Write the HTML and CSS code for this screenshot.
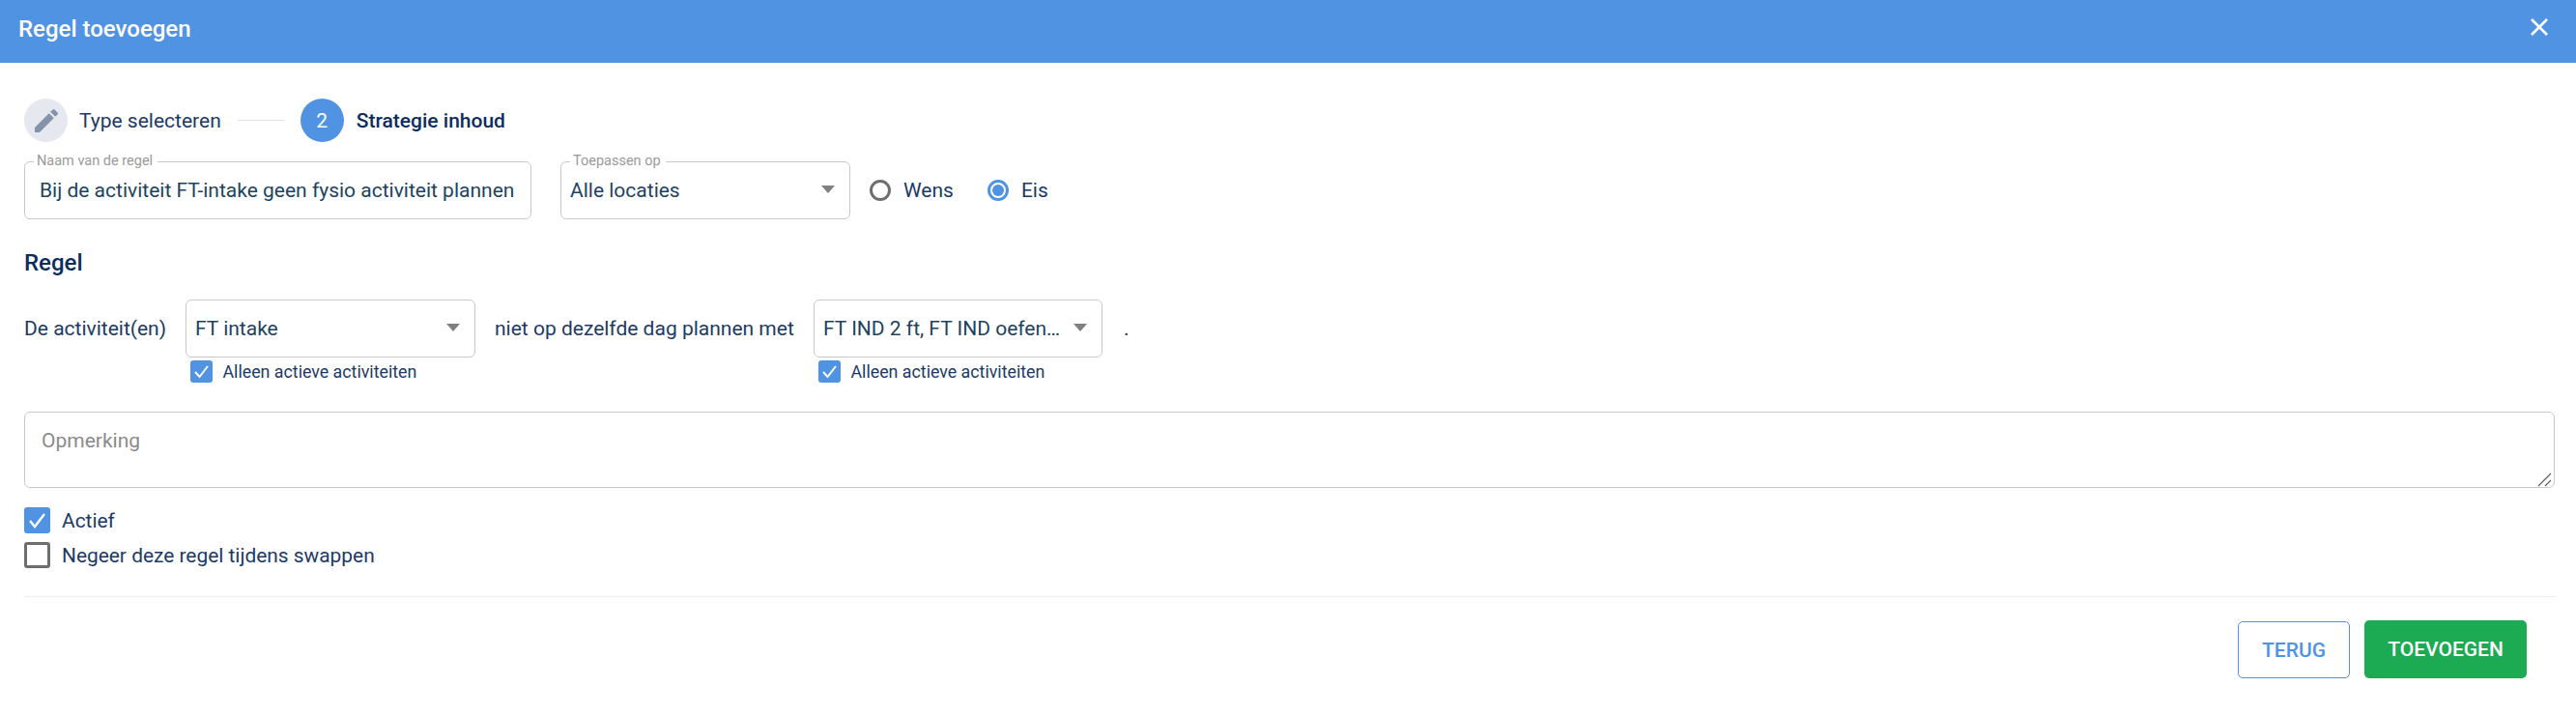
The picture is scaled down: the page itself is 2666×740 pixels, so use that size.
FILE: index.html
```html
<!DOCTYPE html>
<html lang="nl">
<head>
<meta charset="utf-8">
<title>Regel toevoegen</title>
<link rel="stylesheet" href="styles.css">
</head>
<body>
<header class="topbar">
  <h1 class="title">Regel toevoegen</h1>
  <svg class="close" viewBox="0 0 18 18" width="18" height="18"><path d="M1 1L17 17M17 1L1 17" fill="none" stroke="#fff" stroke-width="2.6"/></svg>
</header>
<main class="content">
  <div class="stepper">
    <span class="step-icon done">
      <svg viewBox="0 0 24 24" width="32" height="32"><path fill="#8593aa" d="M3 17.25V21h3.75L17.81 9.94l-3.75-3.75L3 17.25zM20.71 7.04a1 1 0 0 0 0-1.41l-2.34-2.34a1 1 0 0 0-1.41 0l-1.83 1.83 3.75 3.75 1.83-1.83z"/></svg>
    </span>
    <span class="step-label">Type selecteren</span>
    <span class="step-line"></span>
    <span class="step-icon active">2</span>
    <span class="step-label current">Strategie inhoud</span>
  </div>

  <div class="row-top">
    <div class="field name-field">
      <span class="legend">Naam van de regel</span>
      <span class="value">Bij de activiteit FT-intake geen fysio activiteit plannen</span>
    </div>
    <div class="field scope-field">
      <span class="legend">Toepassen op</span>
      <span class="value">Alle locaties</span>
      <span class="caret"></span>
    </div>
    <label class="radio"><span class="radio-dot"></span>Wens</label>
    <label class="radio"><span class="radio-dot on"></span>Eis</label>
  </div>

  <h2 class="section">Regel</h2>

  <div class="rule">
    <span class="rule-text first">De activiteit(en)</span>
    <div class="rule-col">
      <div class="field act-field">
        <span class="value">FT intake</span>
        <span class="caret"></span>
      </div>
      <label class="small-check">
        <span class="box small on"><svg viewBox="0 0 23 23" width="23" height="23"><path d="M5 12L9.5 17L18 6" fill="none" stroke="#fff" stroke-width="2"/></svg></span>
        Alleen actieve activiteiten
      </label>
    </div>
    <span class="rule-text mid">niet op dezelfde dag plannen met</span>
    <div class="rule-col narrow">
      <div class="field act-field">
        <span class="value">FT IND 2 ft, FT IND oefen…</span>
        <span class="caret"></span>
      </div>
      <label class="small-check">
        <span class="box small on"><svg viewBox="0 0 23 23" width="23" height="23"><path d="M5 12L9.5 17L18 6" fill="none" stroke="#fff" stroke-width="2"/></svg></span>
        Alleen actieve activiteiten
      </label>
    </div>
    <span class="rule-text dot">.</span>
  </div>

  <div class="remark">
    <span class="placeholder">Opmerking</span>
    <svg class="grip" viewBox="0 0 15 15" width="15" height="15"><path d="M1 14L14 1M8 14L14 8" stroke="#5f5f5f" stroke-width="1.2" fill="none"/></svg>
  </div>

  <label class="check">
    <span class="box on"><svg viewBox="0 0 27 27" width="27" height="27"><path d="M6 14L11 20L21 7" fill="none" stroke="#fff" stroke-width="2.4"/></svg></span>
    Actief
  </label>
  <label class="check second">
    <span class="box"></span>
    Negeer deze regel tijdens swappen
  </label>

  <hr class="divider">

  <div class="actions">
    <button class="btn ghost" type="button">TERUG</button>
    <button class="btn primary" type="button">TOEVOEGEN</button>
  </div>
</main>
</body>
</html>
```
FILE: styles.css
```css
* { box-sizing: border-box; }
html, body { margin: 0; padding: 0; background: #fff; }
body { font-family: Roboto, "Liberation Sans", sans-serif; color: #1c3a66; width: 2666px; height: 740px; overflow: hidden; }

.topbar { height: 65px; background: #5093e3; display: flex; align-items: center; justify-content: space-between; padding: 0 29px 6px 19px; }
.title { margin: 0; font-size: 24px; font-weight: 500; color: #fff; }
.close { display: block; margin-top: -3px; }

.content { padding: 37px 22px 0 25px; }

.stepper { display: flex; align-items: center; height: 45px; }
.step-icon { width: 45px; height: 45px; border-radius: 50%; display: flex; align-items: center; justify-content: center; flex: none; }
.step-icon.done { background: #e5e8ee; }
.step-icon.active { background: #5093e3; color: #fff; font-size: 21px; }
.step-label { font-size: 21px; margin-left: 12px; color: #1c3a66; }
.step-label.current { font-weight: 500; color: #0c2d5e; margin-left: 13px; }
.step-line { width: 48px; height: 1px; background: #dcdfe3; margin: 0 17px; }

.row-top { display: flex; align-items: center; margin-top: 20px; }
.field { position: relative; height: 60px; border: 1px solid #c9c9c9; border-radius: 6px; display: flex; align-items: center; background: #fff; }
.legend { position: absolute; top: -9px; left: 9px; padding: 0 5px 0 3px; background: #fff; font-size: 14.5px; line-height: 16px; color: #9a9a9a; }
.value { font-size: 21px; color: #1d4360; white-space: nowrap; }
.caret { position: absolute; right: 15px; top: 24px; width: 0; height: 0; border-left: 7px solid transparent; border-right: 7px solid transparent; border-top: 8px solid #808080; }
.name-field { width: 525px; padding-left: 15px; }
.scope-field { width: 300px; margin-left: 30px; padding-left: 9px; }

.radio { display: flex; align-items: center; font-size: 21px; color: #1c3a66; margin-left: 20px; height: 22px; }
.radio + .radio { margin-left: 35px; }
.radio-dot { width: 22px; height: 22px; border: 3px solid #6e6e6e; border-radius: 50%; margin-right: 13px; flex: none; background: #fff; }
.radio-dot.on { border-color: #5093e3; background: #5093e3; background-clip: content-box; padding: 2px; }

.section { margin: 32px 0 0; padding-bottom: 1px; font-size: 24px; line-height: 26px; font-weight: 500; color: #0c2d5e; }

.rule { display: flex; align-items: flex-start; margin-top: 24px; }
.rule-text { font-size: 21px; line-height: 60px; white-space: nowrap; color: #1c3a66; }
.rule-text.first { width: 167px; }
.rule-text.mid { margin-left: 20px; width: 330px; }
.rule-text.dot { margin-left: 22px; }
.rule-col { display: flex; flex-direction: column; width: 300px; }
.rule-col.narrow { width: 299px; }
.act-field { width: 100%; padding-left: 9px; }
.small-check { display: flex; align-items: center; font-size: 17.8px; color: #1c3a66; margin-top: 3px; margin-left: 5px; height: 23px; }
.box { display: inline-block; width: 27px; height: 27px; border: 3px solid #6e6e6e; border-radius: 3px; margin-right: 12px; flex: none; }
.box svg { display: block; }
.box.on { border: 0; background: #5093e3; }
.box.small { width: 23px; height: 23px; margin-right: 10.5px; }

.remark { position: relative; height: 79px; margin-top: 30px; border: 1px solid #c9c9c9; border-radius: 6px; padding: 14px 17px; }
.placeholder { font-size: 21px; line-height: 30px; color: #8b8b8b; }
.grip { position: absolute; right: 2px; bottom: 0; }

.check { display: flex; align-items: center; height: 27px; font-size: 20.9px; color: #1c3a66; margin-top: 20px; }
.check.second { margin-top: 9px; }

.divider { border: 0; border-top: 1px solid #ececec; margin: 29px -1px 0 0; }

.actions { display: flex; justify-content: flex-end; align-items: flex-end; gap: 15px; padding-right: 29px; margin-top: 24px; }
.btn { height: 59px; border-radius: 5px; font-family: inherit; font-size: 21px; font-weight: 500; padding: 0; }
.btn.ghost { width: 116px; background: #fff; border: 1px solid #5093e3; color: #5093e3; }
.btn.primary { width: 168px; height: 60px; background: #1caa52; border: 0; color: #fff; }
```
